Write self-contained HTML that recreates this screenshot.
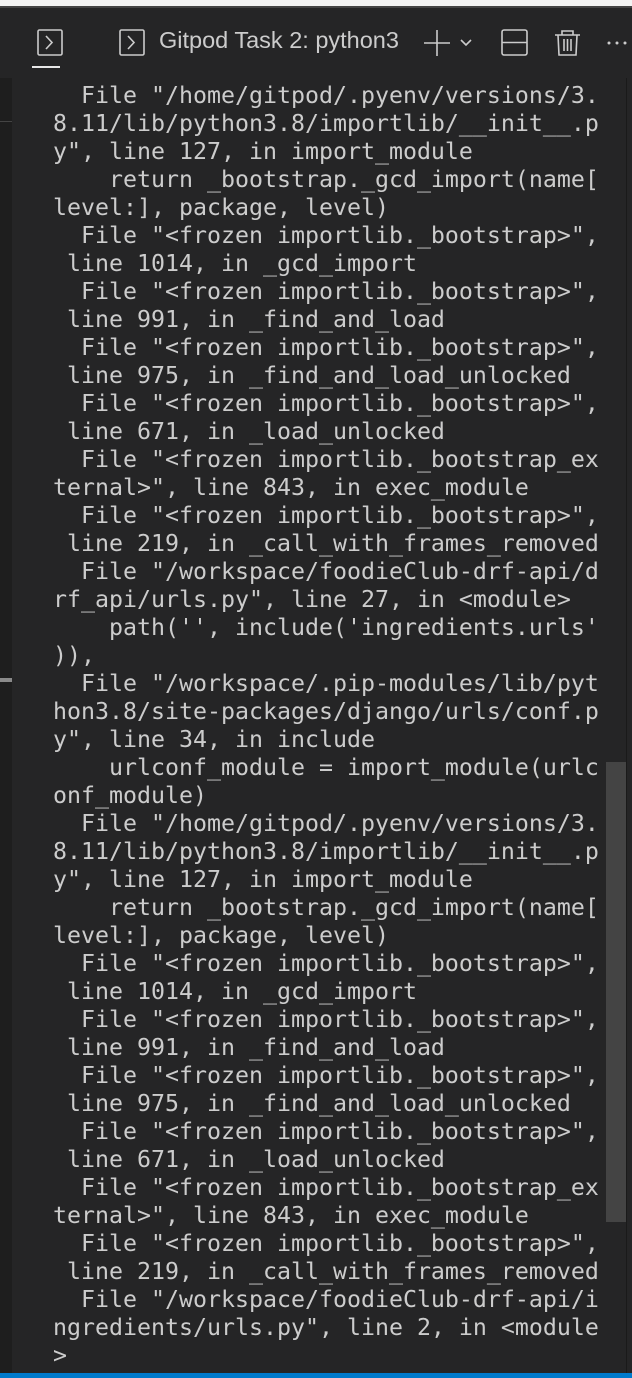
<!DOCTYPE html>
<html><head><meta charset="utf-8"><style>
html,body{margin:0;padding:0;}
body{width:632px;height:1378px;background:#252526;position:relative;overflow:hidden;font-family:"Liberation Sans",sans-serif;}
.top{position:absolute;left:0;top:0;width:632px;height:6px;background:#f3f3f3;}
.top2{position:absolute;left:0;top:6px;width:632px;height:2px;background:#444;}
.hdr{position:absolute;left:0;top:8px;width:632px;height:70px;background:#252526;}
.gut{position:absolute;left:0;top:78px;width:12px;height:1300px;background:#1e1e1e;}
.term{position:absolute;left:53px;top:82px;margin:0;font-family:"DejaVu Sans Mono","Liberation Mono",monospace;font-size:23.25px;line-height:28px;color:#cccccc;white-space:pre;}
.tab{position:absolute;left:159px;top:27px;color:#cccccc;font-size:23.5px;}
</style></head><body>
<div class="top"></div><div class="top2"></div>
<div class="hdr"></div>
<svg style="position:absolute;left:0;top:0" width="632" height="80">
<g fill="none" stroke="#cccccc" stroke-width="1.6">
<rect x="38" y="30" width="24" height="25" rx="1.5"/>
<path d="M46 36 L52 42.5 L46 49"/>
<rect x="120" y="30" width="24" height="25" rx="1.5"/>
<path d="M128 36 L134 42.5 L128 49"/>
<path d="M424 43 H450 M437 30 V56"/>
<path d="M461 40 L466 45 L471 40"/>
<rect x="502" y="30" width="25" height="25" rx="2"/>
<path d="M502 42.5 H527"/>
<path d="M555 35 H580 M562 35 V31 H573 V35 M558 35 L559 55 H576 L577 35 M564 39 V51 M567.5 39 V51 M571 39 V51"/>
</g>
<circle cx="609" cy="43" r="1.5" fill="#ccc"/><circle cx="617" cy="43" r="1.5" fill="#ccc"/><circle cx="625" cy="43" r="1.5" fill="#ccc"/>
<rect x="32" y="66" width="28" height="2" fill="#e7e7e7"/>
</svg>
<div class="tab">Gitpod Task 2: python3</div>
<div class="gut"></div>
<div style="position:absolute;left:0;top:121px;width:12px;height:1px;background:#444"></div>
<div style="position:absolute;left:0;top:678px;width:12px;height:4px;background:#8a8a8a"></div>
<div style="position:absolute;left:626px;top:78px;width:1px;height:1296px;background:#1a1a1a"></div>
<div style="position:absolute;left:606px;top:762px;width:20px;height:460px;background:#444"></div>
<pre class="term">  File "/home/gitpod/.pyenv/versions/3.
8.11/lib/python3.8/importlib/__init__.p
y", line 127, in import_module
    return _bootstrap._gcd_import(name[
level:], package, level)
  File "&lt;frozen importlib._bootstrap&gt;",
 line 1014, in _gcd_import
  File "&lt;frozen importlib._bootstrap&gt;",
 line 991, in _find_and_load
  File "&lt;frozen importlib._bootstrap&gt;",
 line 975, in _find_and_load_unlocked
  File "&lt;frozen importlib._bootstrap&gt;",
 line 671, in _load_unlocked
  File "&lt;frozen importlib._bootstrap_ex
ternal&gt;", line 843, in exec_module
  File "&lt;frozen importlib._bootstrap&gt;",
 line 219, in _call_with_frames_removed
  File "/workspace/foodieClub-drf-api/d
rf_api/urls.py", line 27, in &lt;module&gt;
    path('', include('ingredients.urls'
)),
  File "/workspace/.pip-modules/lib/pyt
hon3.8/site-packages/django/urls/conf.p
y", line 34, in include
    urlconf_module = import_module(urlc
onf_module)
  File "/home/gitpod/.pyenv/versions/3.
8.11/lib/python3.8/importlib/__init__.p
y", line 127, in import_module
    return _bootstrap._gcd_import(name[
level:], package, level)
  File "&lt;frozen importlib._bootstrap&gt;",
 line 1014, in _gcd_import
  File "&lt;frozen importlib._bootstrap&gt;",
 line 991, in _find_and_load
  File "&lt;frozen importlib._bootstrap&gt;",
 line 975, in _find_and_load_unlocked
  File "&lt;frozen importlib._bootstrap&gt;",
 line 671, in _load_unlocked
  File "&lt;frozen importlib._bootstrap_ex
ternal&gt;", line 843, in exec_module
  File "&lt;frozen importlib._bootstrap&gt;",
 line 219, in _call_with_frames_removed
  File "/workspace/foodieClub-drf-api/i
ngredients/urls.py", line 2, in &lt;module
&gt;</pre>
<div style="position:absolute;left:0;top:1373px;width:632px;height:5px;background:#007acc"></div>
</body></html>
